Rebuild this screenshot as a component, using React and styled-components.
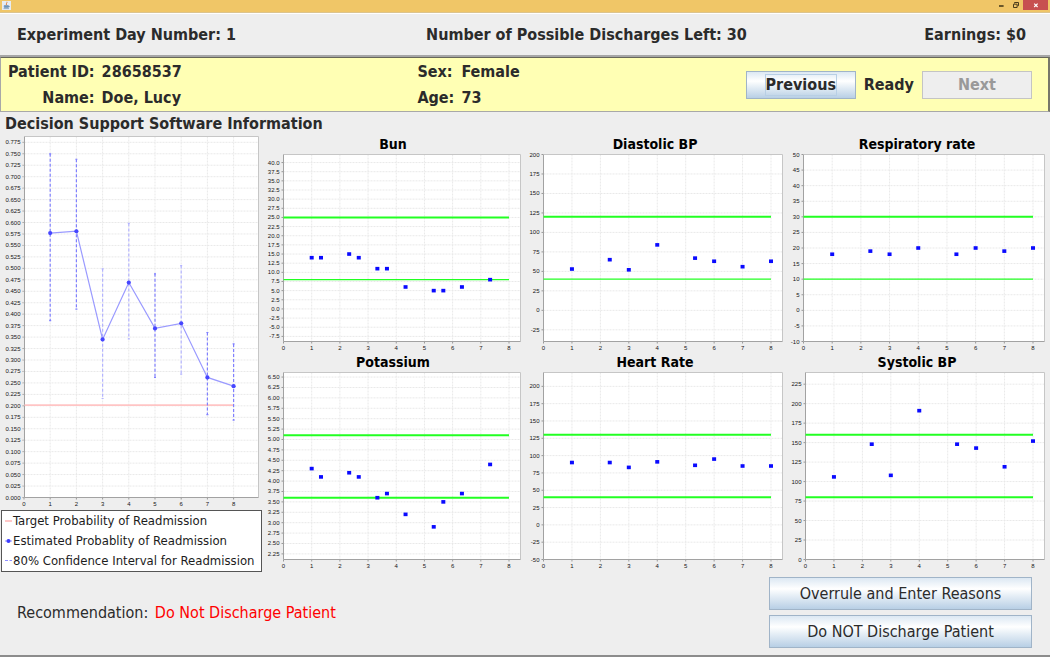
import React from "react";
import styled, { createGlobalStyle, css } from "styled-components";

const GlobalStyle = createGlobalStyle`
  * { box-sizing: border-box; }
  body {
    margin: 0;
    background: #eeeeee;
    color: #2b2b2b;
    font-family: "DejaVu Sans Condensed", "DejaVu Sans", Tahoma, sans-serif;
    font-size: 16px;
    line-height: 20px;
  }
`;

const Window = styled.div`
  display: flex;
  flex-direction: column;
  min-height: 100vh;
  border-bottom: 2px solid #8c8c8c;
`;

const TitleBar = styled.div`
  display: flex;
  align-items: flex-start;
  justify-content: space-between;
  height: 13px;
  padding: 0 2px;
  background: #f0c667;
  border-bottom: 1px solid #dcc48e;
`;

const AppIcon = styled.svg`
  width: 9px;
  height: 9px;
  margin-top: 1px;
`;

const WindowControls = styled.div`
  display: flex;
`;

const WindowButton = styled.button`
  display: flex;
  align-items: center;
  justify-content: center;
  width: ${(p) => (p.$close ? "25px" : "14px")};
  height: 10px;
  padding: 0;
  border: 0;
  background: ${(p) => (p.$close ? "#c75050" : "transparent")};
`;

const StatusBar = styled.header`
  display: grid;
  grid-template-columns: 409fr 498fr auto;
  align-items: center;
  height: 44px;
  padding: 0 24px 0 17px;
  border-top: 1px solid #ffffff;
  border-bottom: 2px solid #a6a6a6;
  font-weight: bold;
`;

const PatientBar = styled.section`
  display: grid;
  grid-template-columns: 409fr 328fr auto;
  align-items: center;
  height: 55px;
  padding: 0 16px 0 7px;
  background: #ffffb4;
  border: 1px solid #a8a8a8;
  border-top-color: #66665a;
  border-right: 2px solid #77776a;
  font-weight: bold;
`;

const Fields = styled.dl`
  display: grid;
  grid-template-columns: max-content max-content;
  gap: 6px 7px;
  margin: 0;
`;

const FieldName = styled.dt`
  text-align: ${(p) => (p.$end ? "right" : "left")};
`;

const FieldValue = styled.dd`
  margin: 0;
`;

const Actions = styled.div`
  display: flex;
  align-items: center;
  gap: 8px;
`;

const Button = styled.button`
  display: flex;
  align-items: center;
  justify-content: center;
  padding: 0;
  border: 1px solid #a0b4c8;
  background: linear-gradient(#dce8f3, #ffffff 35%, #e8f0f7 55%, #b8cfe5);
  color: #2b2b2b;
  font: inherit;
  ${(p) =>
    p.$wide
      ? css`
          width: 263px;
          height: 33px;
        `
      : css`
          width: 110px;
          height: 28px;
        `}
  &:disabled {
    background: #eeeeee;
    border-color: #c4c4c4;
    color: #999999;
  }
`;

const FocusFrame = styled.span`
  outline: 1px solid #b8cfe5;
`;

const SectionTitle = styled.h1`
  margin: 0;
  padding: 2px 5px 1px;
  font-size: 16px;
  line-height: 20px;
`;

const Dashboard = styled.main`
  display: grid;
  grid-template-columns: 1fr 3fr;
  padding-right: 2px;
`;

const RiskColumn = styled.section`
  min-width: 0;
`;

const VitalsGrid = styled.section`
  display: grid;
  grid-template-columns: repeat(3, 1fr);
  align-content: start;
`;

const Vital = styled.figure`
  margin: 0;
  min-width: 0;
`;

const VitalTitle = styled.figcaption`
  height: 18px;
  color: #000000;
  font-size: 14px;
  font-weight: bold;
  line-height: 18px;
  text-align: center;
`;

const Plot = styled.svg`
  display: block;
  width: 100%;
  height: auto;
  text {
    fill: #161616;
    font-family: "Liberation Sans", Arial, sans-serif;
    font-size: 6px;
  }
`;

const Legend = styled.ul`
  margin: 0 0 0 1px;
  padding: 0 0 0 3px;
  list-style: none;
  background: #ffffff;
  border: 1px solid #555555;
`;

const LegendItem = styled.li`
  display: flex;
  align-items: center;
  height: 20px;
  font-size: 13px;
  color: #1c1c1c;
  white-space: nowrap;
`;

const LegendMark = styled.svg`
  flex: none;
  width: 8px;
  height: 8px;
`;

const Footer = styled.footer`
  display: flex;
  align-items: flex-start;
  justify-content: space-between;
  padding: 5px 18px 6px 17px;
`;

const Recommendation = styled.p`
  margin: 0;
  padding-top: 26px;
`;

const Verdict = styled.strong`
  margin-left: 2px;
  color: #ff0000;
  font-weight: normal;
`;

const Decisions = styled.div`
  display: flex;
  flex-direction: column;
  gap: 5px;
`;

const X_TICKS = [0, 1, 2, 3, 4, 5, 6, 7, 8];

function ticks(from, to, step) {
  const count = Math.round((to - from) / step);
  return Array.from({ length: count + 1 }, (_, i) => from + i * step);
}

function Axes({ left, right, top, bottom, x, y, yTicks, digits }) {
  return (
    <g>
      <rect x={left} y={top} width={right - left} height={bottom - top} fill="#fff" />
      {yTicks.map((t) => (
        <g key={t}>
          <line x1={left} x2={right} y1={y(t)} y2={y(t)} stroke="#e9e9e9" strokeDasharray="2 1" />
          <line x1={left - 2} x2={left} y1={y(t)} y2={y(t)} stroke="#999" />
          <text x={left - 4} y={y(t) + 2} textAnchor="end">
            {t.toFixed(digits)}
          </text>
        </g>
      ))}
      {X_TICKS.map((t) => (
        <g key={t}>
          <line x1={x(t)} x2={x(t)} y1={top} y2={bottom} stroke="#e9e9e9" strokeDasharray="2 1" />
          <line x1={x(t)} x2={x(t)} y1={bottom} y2={bottom + 2} stroke="#999" />
          <text x={x(t)} y={bottom + 8} textAnchor="middle">
            {t}
          </text>
        </g>
      ))}
      <path d={`M${left} ${top}H${right}V${bottom}`} fill="none" stroke="#c6c6c6" />
      <path d={`M${left} ${top}V${bottom}H${right}`} fill="none" stroke="#a2a2a2" />
    </g>
  );
}

const THIRDS = [1, 2.33, 3, 4, 5.33, 6, 7, 8];
const LAB_TIMES = [1, 1.33, 2.33, 2.67, 3.33, 3.67, 4.33, 5.33, 5.67, 6.33, 7.33];

const VITALS = [
  { name: "Bun", left: 21.5, range: [-8.9, 42.2], ticks: ticks(-7.5, 40, 2.5), digits: 1, high: 25, low: 8, thinLow: true, times: LAB_TIMES, values: [14, 14, 15, 14, 11, 11, 6, 5, 5, 6, 8] },
  { name: "Diastolic BP", left: 19.5, range: [-40, 200], ticks: ticks(-25, 200, 25), digits: 0, high: 120, low: 40, thinLow: true, times: THIRDS, values: [53, 65, 52, 84, 67, 63, 56, 63] },
  { name: "Respiratory rate", left: 17.5, range: [-10, 50], ticks: ticks(-10, 50, 5), digits: 0, high: 30, low: 10, thinLow: true, times: THIRDS, values: [18, 19, 18, 20, 18, 20, 19, 20] },
  { name: "Potassium", left: 21.5, range: [2.115, 6.61], ticks: ticks(2.25, 6.5, 0.25), digits: 2, high: 5.1, low: 3.6, times: LAB_TIMES, values: [4.3, 4.1, 4.2, 4.1, 3.6, 3.7, 3.2, 2.9, 3.5, 3.7, 4.4] },
  { name: "Heart Rate", left: 19.5, range: [-50, 220], ticks: ticks(-50, 200, 25), digits: 0, high: 130, low: 40, times: THIRDS, values: [90, 90, 83, 91, 86, 95, 85, 85] },
  { name: "Systolic BP", left: 19.5, range: [0, 240], ticks: ticks(0, 225, 25), digits: 0, high: 160, low: 80, times: THIRDS, values: [106, 148, 108, 191, 148, 143, 119, 152] },
];

function VitalChart({ vital }) {
  const [min, max] = vital.range;
  const left = vital.left;
  const right = 258.5;
  const top = 1.5;
  const bottom = 188.5;
  const x = (v) => left + (v * (247 - left)) / 8;
  const y = (v) => bottom - ((v - min) / (max - min)) * (bottom - top);
  return (
    <Vital>
      <VitalTitle>{vital.name}</VitalTitle>
      <Plot viewBox="0 0 262 200" role="img" aria-label={vital.name}>
        <Axes left={left} right={right} top={top} bottom={bottom} x={x} y={y} yTicks={vital.ticks} digits={vital.digits} />
        <line x1={left} x2={x(8)} y1={y(vital.high)} y2={y(vital.high)} stroke="#22ff22" strokeWidth="2" />
        <line x1={left} x2={x(8)} y1={y(vital.low)} y2={y(vital.low)} stroke="#22ff22" strokeWidth={vital.thinLow ? 1.4 : 2} />
        {vital.values.map((v, i) => (
          <rect key={vital.times[i]} x={x(vital.times[i]) - 2} y={y(v) - 1.8} width="4" height="3.6" fill="#0a0aff" />
        ))}
      </Plot>
    </Vital>
  );
}

const ESTIMATES = [
  [1, 0.577, 0.386, 0.75],
  [2, 0.581, 0.411, 0.738],
  [3, 0.345, 0.216, 0.499],
  [4, 0.469, 0.346, 0.598],
  [5, 0.369, 0.262, 0.488],
  [6, 0.38, 0.269, 0.506],
  [7, 0.262, 0.181, 0.36],
  [8, 0.243, 0.169, 0.335],
];

function RiskChart() {
  const left = 24.5;
  const right = 258.5;
  const top = 1.5;
  const bottom = 362.5;
  const x = (v) => left - 0.5 + v * 26.2;
  const y = (v) => bottom - v * 458.3;
  return (
    <Plot viewBox="0 0 262 375" role="img" aria-label="Probability of readmission by day">
      <Axes left={left} right={right} top={top} bottom={bottom} x={x} y={y} yTicks={ticks(0, 0.775, 0.025)} digits={3} />
      <line x1={left} x2={x(8)} y1={y(0.2015)} y2={y(0.2015)} stroke="#ffc4c4" strokeWidth="1.6" />
      {ESTIMATES.map(([day, , low, high]) => {
        const faint = day === 3 || day === 4 || day === 6;
        return (
          <g key={day} stroke={faint ? "#b4b4ff" : "#8080ff"} strokeWidth="1.2">
            <line x1={x(day)} x2={x(day)} y1={y(high)} y2={y(low)} strokeDasharray="3 2" />
            <path d={`M${x(day) - 1} ${y(high)}h2M${x(day) - 1} ${y(low)}h2`} />
          </g>
        );
      })}
      <polyline points={ESTIMATES.map(([day, p]) => `${x(day)},${y(p)}`).join(" ")} fill="none" stroke="#9a9aff" strokeWidth="1.2" />
      {ESTIMATES.map(([day, p]) => (
        <circle key={day} cx={x(day)} cy={y(p)} r="2.1" fill="#4646ff" />
      ))}
    </Plot>
  );
}

export default function App() {
  return (
    <>
      <GlobalStyle />
      <Window>
        <TitleBar>
          <AppIcon viewBox="0 0 9 9" aria-hidden="true">
            <rect width="9" height="9" fill="#e6ecf2" />
            <path d="M4.8 0.8C5.6 2 3.6 2.4 4.5 4" fill="none" stroke="#e0813c" />
            <path d="M2.2 4.6h4v1.8h-4zM6.2 5h1v1h-1M1.6 7.6h5.4" fill="#6f93b8" stroke="#6f93b8" strokeWidth="0.7" />
          </AppIcon>
          <WindowControls>
            <WindowButton aria-label="Minimize">
              <svg width="8" height="8" viewBox="0 0 8 8" aria-hidden="true">
                <path d="M1 5h4.6" stroke="#4a3c1c" strokeWidth="1.6" />
              </svg>
            </WindowButton>
            <WindowButton aria-label="Restore">
              <svg width="8" height="8" viewBox="0 0 8 8" aria-hidden="true">
                <path d="M2.5 2.5V1.5h4v3.2H5.5" fill="none" stroke="#4a3c1c" />
                <path d="M1.5 3.2h3.6v3.3H1.5z" fill="none" stroke="#4a3c1c" />
              </svg>
            </WindowButton>
            <WindowButton $close aria-label="Close">
              <svg width="8" height="8" viewBox="0 0 8 8" aria-hidden="true">
                <path d="M2.2 2.6l3.4 3.4M5.6 2.6L2.2 6" stroke="#fff" strokeWidth="1.2" />
              </svg>
            </WindowButton>
          </WindowControls>
        </TitleBar>

        <StatusBar>
          <span>Experiment Day Number: 1</span>
          <span>Number of Possible Discharges Left: 30</span>
          <span>Earnings: $0</span>
        </StatusBar>

        <PatientBar>
          <Fields>
            <FieldName $end>Patient ID:</FieldName>
            <FieldValue>28658537</FieldValue>
            <FieldName $end>Name:</FieldName>
            <FieldValue>Doe, Lucy</FieldValue>
          </Fields>
          <Fields>
            <FieldName>Sex:</FieldName>
            <FieldValue>Female</FieldValue>
            <FieldName>Age:</FieldName>
            <FieldValue>73</FieldValue>
          </Fields>
          <Actions>
            <Button>
              <FocusFrame>Previous</FocusFrame>
            </Button>
            <span>Ready</span>
            <Button disabled>Next</Button>
          </Actions>
        </PatientBar>

        <SectionTitle>Decision Support Software Information</SectionTitle>

        <Dashboard>
          <RiskColumn>
            <RiskChart />
            <Legend>
              <LegendItem>
                <LegendMark viewBox="0 0 8 8" aria-hidden="true">
                  <path d="M0 4h7" stroke="#ff8f8f" />
                </LegendMark>
                Target Probability of Readmission
              </LegendItem>
              <LegendItem>
                <LegendMark viewBox="0 0 8 8" aria-hidden="true">
                  <path d="M0 4h7" stroke="#8f8fff" />
                  <circle cx="3.5" cy="4" r="2" fill="#3c3cff" />
                </LegendMark>
                Estimated Probablity of Readmission
              </LegendItem>
              <LegendItem>
                <LegendMark viewBox="0 0 8 8" aria-hidden="true">
                  <path d="M0 3.5h7" stroke="#8f8fff" strokeDasharray="3 1.5" />
                </LegendMark>
                80% Confidence Interval for Readmission
              </LegendItem>
            </Legend>
          </RiskColumn>
          <VitalsGrid>
            {VITALS.map((vital) => (
              <VitalChart key={vital.name} vital={vital} />
            ))}
          </VitalsGrid>
        </Dashboard>

        <Footer>
          <Recommendation>
            Recommendation: <Verdict>Do Not Discharge Patient</Verdict>
          </Recommendation>
          <Decisions>
            <Button $wide>Overrule and Enter Reasons</Button>
            <Button $wide>Do NOT Discharge Patient</Button>
          </Decisions>
        </Footer>
      </Window>
    </>
  );
}
